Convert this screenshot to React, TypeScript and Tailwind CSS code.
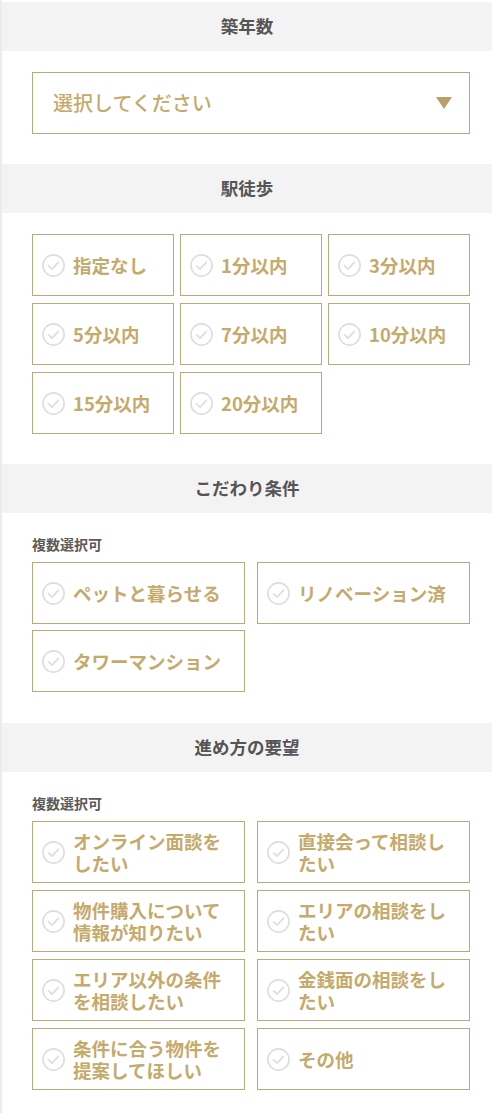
import type { ReactNode } from "react";

const font = { fontFamily: '"Noto Sans CJK JP", "Noto Sans", sans-serif' };

const walkOptions = ["指定なし", "1分以内", "3分以内", "5分以内", "7分以内", "10分以内", "15分以内", "20分以内"];
const prefOptions = ["ペットと暮らせる", "リノベーション済", "タワーマンション"];
const flowOptions = [
  "オンライン面談をしたい",
  "直接会って相談したい",
  "物件購入について情報が知りたい",
  "エリアの相談をしたい",
  "エリア以外の条件を相談したい",
  "金銭面の相談をしたい",
  "条件に合う物件を提案してほしい",
  "その他",
];

function CheckIcon() {
  return (
    <svg width="23" height="23" viewBox="0 0 23 23" fill="none" className="shrink-0">
      <circle cx="11.5" cy="11.5" r="10.6" stroke="#dedede" strokeWidth="1.7" />
      <path d="M6.6 11.8l3.4 3.4 6.4-6.8" stroke="#dedede" strokeWidth="1.7" strokeLinecap="round" strokeLinejoin="round" />
    </svg>
  );
}

function Option({ label }: { label: string }) {
  return (
    <div className="flex h-[62px] items-center gap-[8px] border border-[#bba97a] bg-white pl-[9px] pr-[12px]">
      <CheckIcon />
      <span className="text-[18.5px] font-bold leading-[22px] text-[#c4aa6c]">{label}</span>
    </div>
  );
}

function Header({ children }: { children: ReactNode }) {
  return (
    <div className="flex h-[49px] items-center justify-center bg-[#f3f3f3] text-[17.5px] font-bold text-[#555555]">
      {children}
    </div>
  );
}

function Note() {
  return <p className="mb-[8px] text-[14px] font-bold leading-[20px] text-[#5a5a5a]">複数選択可</p>;
}

export default function App() {
  return (
    <div style={font} className="min-h-[1113px] border-l-2 border-[#ececec] bg-white pt-[2px]">
      <Header>築年数</Header>
      <div className="pb-[30px] pl-[30px] pr-[22px] pt-[21px]">
        <div className="flex h-[62px] items-center justify-between border border-[#bba97a] pl-[20px] pr-[17px]">
          <span className="text-[20px] font-medium text-[#c4aa6c]">選択してください</span>
          <svg width="16" height="12" viewBox="0 0 16 12">
            <path d="M0 0h16L8 12z" fill="#b9a064" />
          </svg>
        </div>
      </div>

      <Header>駅徒歩</Header>
      <div className="pb-[30px] pl-[30px] pr-[22px] pt-[21px]">
        <div className="grid grid-cols-3 gap-x-[6px] gap-y-[7px]">
          {walkOptions.map((o) => (
            <Option key={o} label={o} />
          ))}
        </div>
      </div>

      <Header>こだわり条件</Header>
      <div className="pb-[31px] pl-[30px] pr-[22px] pt-[21px]">
        <Note />
        <div className="grid grid-cols-2 gap-x-[12px] gap-y-[6px]">
          {prefOptions.map((o) => (
            <Option key={o} label={o} />
          ))}
        </div>
      </div>

      <Header>進め方の要望</Header>
      <div className="pb-[23px] pl-[30px] pr-[22px] pt-[21px]">
        <Note />
        <div className="grid grid-cols-2 gap-x-[12px] gap-y-[7px]">
          {flowOptions.map((o) => (
            <Option key={o} label={o} />
          ))}
        </div>
      </div>
    </div>
  );
}
